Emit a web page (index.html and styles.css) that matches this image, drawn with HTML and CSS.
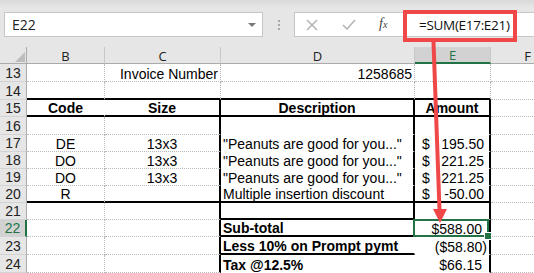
FILE: index.html
```html
<!DOCTYPE html>
<html lang="en">
<head>
    <meta charset="UTF-8">
    <meta name="viewport" content="width=device-width, initial-scale=1.0">
    <title>Invoice - Sub-total</title>
    <link rel="stylesheet" href="styles.css">
</head>
<body>
    <div class="app">
        <div class="bar">
            <div class="namebox">E22<span class="caret"></span></div>
            <div class="grip"><i></i><i></i><i></i></div>
            <div class="fbar">
                <svg class="cancel" width="12" height="12" viewBox="0 0 12 12"><path d="M1 1L11 11M11 1L1 11" stroke="#b3b3b3" stroke-width="1.5" fill="none"/></svg>
                <svg class="enter" width="14" height="11" viewBox="0 0 14 11"><path d="M1 6L5 10L13 1" stroke="#b3b3b3" stroke-width="1.5" fill="none"/></svg>
                <span class="fx"><i>f</i><small>x</small></span>
                <span class="formula">=SUM(E17:E21)</span>
            </div>
        </div>

        <div class="sheet">
            <div class="corner"></div><div class="ch">B</div><div class="ch">C</div><div class="ch">D</div><div class="ch sel">E</div><div class="ch">F</div>

            <div class="rh">13</div><div class="c"></div><div class="c rt">Invoice Number</div><div class="c rt">1258685</div><div class="c"></div><div class="c"></div>
            <div class="rh">14</div><div class="c bb"></div><div class="c bb"></div><div class="c bb"></div><div class="c bb"></div><div class="c"></div>
            <div class="rh">15</div><div class="c bb nr ctr b">Code</div><div class="c bb br ctr b">Size</div><div class="c bb br ctr b">Description</div><div class="c bb br ctr b">Amount</div><div class="c"></div>
            <div class="rh">16</div><div class="c"></div><div class="c br"></div><div class="c br nb"></div><div class="c br nb"></div><div class="c"></div>
            <div class="rh">17</div><div class="c ctr">DE</div><div class="c br ctr">13x3</div><div class="c br nb">"Peanuts are good for you..."</div><div class="c br nb amt"><span>$</span><span>195.50</span></div><div class="c"></div>
            <div class="rh">18</div><div class="c ctr">DO</div><div class="c br ctr">13x3</div><div class="c br nb">"Peanuts are good for you..."</div><div class="c br nb amt"><span>$</span><span>221.25</span></div><div class="c"></div>
            <div class="rh">19</div><div class="c ctr">DO</div><div class="c br ctr">13x3</div><div class="c br nb">"Peanuts are good for you..."</div><div class="c br nb amt"><span>$</span><span>221.25</span></div><div class="c"></div>
            <div class="rh">20</div><div class="c bb ctr">R</div><div class="c bb br"></div><div class="c bb br">Multiple insertion discount</div><div class="c bb br amt"><span>$</span><span>-50.00</span></div><div class="c"></div>
            <div class="rh">21</div><div class="c"></div><div class="c br"></div><div class="c br bb"></div><div class="c br nb"></div><div class="c"></div>
            <div class="rh sel">22</div><div class="c"></div><div class="c br"></div><div class="c br bb b">Sub-total</div><div class="c br nb rt tot cur">$588.00</div><div class="c"></div>
            <div class="rh">23</div><div class="c"></div><div class="c br"></div><div class="c bb nr b">Less 10% on Prompt pymt</div><div class="c br nb rt neg">($58.80)</div><div class="c"></div>
            <div class="rh">24</div><div class="c"></div><div class="c br"></div><div class="c nb nr b">Tax @12.5%</div><div class="c br nb rt tot">$66.15</div><div class="c"></div>
        </div>

        <div class="callout"></div>
        <svg class="arrow" width="534" height="273" viewBox="0 0 534 273">
            <line x1="433.5" y1="42" x2="439.5" y2="210" stroke="#f04848" stroke-width="4"/>
            <polygon points="433,209 447,209 440,223" fill="#f04848"/>
        </svg>
    </div>
</body>
</html>
```

FILE: styles.css
```css
*{
    box-sizing: border-box;
}
body{
    margin: 0;
    background: #fff;
    font-family: "Liberation Sans", Arial, sans-serif;
}
.app{
    position: relative;
    width: 534px;
    height: 273px;
    overflow: hidden;
}

/* formula bar */
.bar{
    height: 47px;
    display: flex;
    align-items: flex-start;
    padding-top: 12px;
    background: linear-gradient(#d9d9d9, #e6e6e6 7px);
}
.namebox{
    margin-left: 4px;
    width: 259px;
    height: 25px;
    display: flex;
    align-items: center;
    padding-left: 7px;
    background: #fff;
    border: 1px solid #c6c6c6;
    font: 14px "Open Sans", sans-serif;
    line-height: 16px;
    color: #222;
}
.caret{
    margin-left: auto;
    margin-right: 6px;
    border-left: 4px solid transparent;
    border-right: 4px solid transparent;
    border-top: 4px solid #7a7a7a;
}
.grip{
    width: 31px;
    display: flex;
    flex-direction: column;
    align-items: center;
    gap: 2px;
    padding-top: 8px;
}
.grip i{
    width: 2px;
    height: 2px;
    background: #a8a8a8;
}
.fbar{
    flex: 1;
    height: 25px;
    display: flex;
    align-items: center;
    background: #fff;
    border: 1px solid #c6c6c6;
    border-right: none;
}
.cancel{
    margin-left: 11px;
}
.enter{
    margin-left: 24px;
}
.fx{
    margin-left: 23px;
    width: 14px;
    font: italic 14px "Liberation Serif", serif;
    line-height: 16px;
    color: #444;
}
.fx small{
    font-size: 10px;
}
.formula{
    margin-left: 26px;
    font: 13.5px "Open Sans", sans-serif;
    line-height: 16px;
    letter-spacing: -0.3px;
    color: #111;
}

/* worksheet */
.sheet{
    display: grid;
    grid-template-columns: 27px 78px 116px 194px 76px 74px;
    grid-template-rows: 17px 18px 18px 17px 18px 17px 17px 17px 17px 17px 17px 18px 18px;
    font-size: 14px;
    color: #000;
}
.corner{
    display: flex;
    align-items: flex-end;
    justify-content: flex-end;
    padding: 0 1px 1px 0;
    background: #e6e6e6;
    border-right: 1px solid #ababab;
    border-bottom: 1px solid #ababab;
}
.corner::after{
    content: "";
    border-left: 10px solid transparent;
    border-bottom: 10px solid #bdbdbd;
}
.ch{
    display: flex;
    align-items: center;
    justify-content: center;
    padding-top: 1px;
    background: #e6e6e6;
    border-right: 1px solid #c8c8c8;
    border-bottom: 1px solid #ababab;
    font: 13px "Open Sans", sans-serif;
    line-height: 14px;
    color: #222;
}
.rh{
    display: flex;
    align-items: center;
    justify-content: center;
    background: #e6e6e6;
    border-right: 1px solid #ababab;
    border-bottom: 1px solid #d3d3d3;
    font: 14px "Liberation Sans", Arial, sans-serif;
    line-height: 14px;
    color: #222;
}
.ch.sel{
    background: #d2d2d2;
    color: #217346;
    border-bottom: 2px solid #217346;
}
.rh.sel{
    background: #d2d2d2;
    color: #217346;
    border-right: 2px solid #217346;
}
.c{
    display: flex;
    align-items: flex-end;
    padding: 0 2px;
    line-height: 13px;
    white-space: nowrap;
    border-right: 1px dotted #bababa;
    border-bottom: 1px dotted #bababa;
}
.bb{
    border-bottom: 2px solid #000;
}
.br{
    border-right: 2px solid #000;
}
.nb{
    border-bottom-color: transparent;
}
.nr{
    border-right-color: transparent;
}
.ctr{
    justify-content: center;
}
.rt{
    justify-content: flex-end;
}
.b{
    font-weight: bold;
}
.amt{
    justify-content: space-between;
    padding: 0 5px 0 7px;
}
.tot{
    padding-right: 7px;
}
.neg{
    padding-right: 2px;
}
.cur{
    position: relative;
}
.cur::after{
    content: "";
    position: absolute;
    top: -1px;
    left: -2px;
    right: 0;
    bottom: -1px;
    border: 2px solid #217346;
}
.cur::before{
    content: "";
    position: absolute;
    right: -3px;
    bottom: -4px;
    width: 6px;
    height: 6px;
    background: #217346;
    border: 1px solid #fff;
    z-index: 1;
}

/* annotation */
.callout{
    position: absolute;
    left: 403px;
    top: 10px;
    width: 114px;
    height: 32px;
    border: 4px solid #f04848;
}
.arrow{
    position: absolute;
    left: 0;
    top: 0;
    z-index: 2;
}
```
